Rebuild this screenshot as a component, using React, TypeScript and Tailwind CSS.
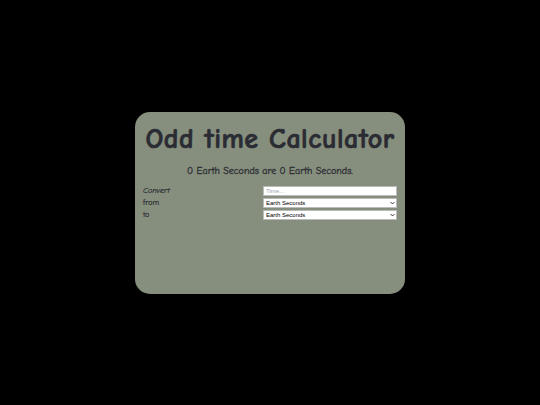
import React, { useState } from 'react';

const UNITS = ['Earth Seconds', 'Earth Minutes', 'Earth Hours', 'Earth Days', 'Mars Sols'];

const FONT = "font-['Comic_Sans_MS','Comic_Neue','Liberation_Sans',sans-serif]";

function Chevron() {
  return (
    <svg viewBox="0 0 8 6" className="absolute right-[2px] top-[3px] w-[5px] h-[4px] pointer-events-none">
      <path d="M1 1.5 L4 4.5 L7 1.5" fill="none" stroke="#333" strokeWidth="1.6" />
    </svg>
  );
}

function UnitSelect({ value, onChange }: { value: string; onChange: (v: string) => void }) {
  return (
    <div className="relative h-[10px]">
      <select
        value={value}
        onChange={(e) => onChange(e.target.value)}
        className="appearance-none w-full h-[10px] bg-white border border-[#bbb] pl-[2px] text-[6px] leading-[8px] text-black font-['Liberation_Sans',sans-serif] outline-none [-webkit-text-stroke:0]"
      >
        {UNITS.map((u) => (
          <option key={u}>{u}</option>
        ))}
      </select>
      <Chevron />
    </div>
  );
}

export default function App() {
  const [value, setValue] = useState('');
  const [from, setFrom] = useState(UNITS[0]);
  const [to, setTo] = useState(UNITS[0]);

  const amount = value === '' ? 0 : Number(value) || 0;

  return (
    <div className={`w-[540px] h-[405px] bg-black flex items-center justify-center ${FONT}`}>
      <div className="w-[270px] h-[182px] rounded-[15px] bg-[#868f7d] text-[#2a2b33] flex flex-col items-center px-[8px]">
        <h1 className="mt-[10px] text-[28px] leading-[34px] font-bold tracking-[0.5px] [-webkit-text-stroke:0.7px_#2a2b33]">
          Odd time Calculator
        </h1>
        <p className="mt-[8px] text-[10px] leading-[14px] [-webkit-text-stroke:0.3px_#2a2b33]">
          {amount} {from} are {amount} {to}.
        </p>
        <div className="mt-[8px] w-full grid grid-cols-[120px_134px] gap-y-[2px] text-[8px] leading-[10px] [-webkit-text-stroke:0.2px_#2a2b33]">
          <label className="italic">Convert</label>
          <input
            value={value}
            onChange={(e) => setValue(e.target.value)}
            placeholder="Time..."
            className="h-[10px] bg-white border border-[#bbb] px-[2px] text-[6px] text-black placeholder:text-gray-400 outline-none font-['Liberation_Sans',sans-serif] [-webkit-text-stroke:0]"
          />
          <label>from</label>
          <UnitSelect value={from} onChange={setFrom} />
          <label>to</label>
          <UnitSelect value={to} onChange={setTo} />
        </div>
      </div>
    </div>
  );
}
